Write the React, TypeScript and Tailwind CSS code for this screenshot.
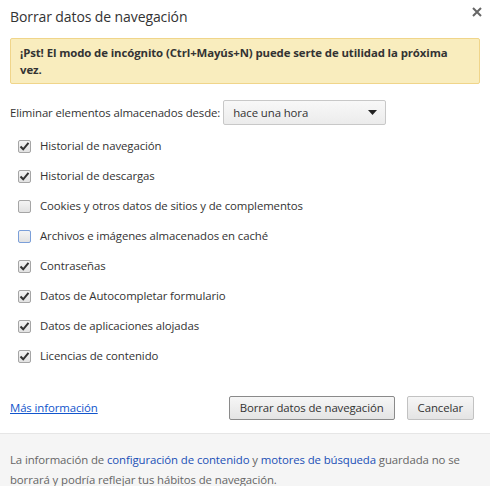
import React from 'react';

const items = [
  { label: 'Historial de navegación', checked: true },
  { label: 'Historial de descargas', checked: true },
  { label: 'Cookies y otros datos de sitios y de complementos', checked: false },
  { label: 'Archivos e imágenes almacenados en caché', checked: false, focus: true },
  { label: 'Contraseñas', checked: true },
  { label: 'Datos de Autocompletar formulario', checked: true },
  { label: 'Datos de aplicaciones alojadas', checked: true },
  { label: 'Licencias de contenido', checked: true },
];

const Check = ({ checked, focus }: { checked: boolean; focus?: boolean }) => (
  <div
    className={`w-[13px] h-[13px] rounded-[2px] border bg-gradient-to-b from-[#f4f4f4] to-[#e2e2e2] flex items-center justify-center ${
      focus ? 'border-[#7b9fd9]' : 'border-[#a5a5a5]'
    }`}
  >
    {checked && (
      <svg width="11" height="11" viewBox="0 0 11 11">
        <path d="M1.5 5.5 L4.2 8.3 L9.5 1.8" fill="none" stroke="#333" strokeWidth="2" />
      </svg>
    )}
  </div>
);

export default function App() {
  return (
    <div className="w-[490px] h-[486px] bg-white text-[#333] text-[11.4px] tracking-[-0.1px] overflow-hidden flex flex-col" style={{ fontFamily: '"Open Sans", sans-serif' }}>
      <div className="flex justify-between pl-[10px] pr-[8px] pt-[6px]">
        <h1 className="text-[14px] text-[#333]">Borrar datos de navegación</h1>
        <svg width="10" height="10" viewBox="0 0 10 10" className="mt-[1px]">
          <path d="M1 1 L9 9 M9 1 L1 9" stroke="#666" strokeWidth="2" />
        </svg>
      </div>

      <div className="mx-[10px] mt-[11px] border border-[#f0d58a] bg-[#f9edbe] rounded-[2px] px-[9px] py-[5px] font-bold leading-[17px] text-[#333]">
        ¡Pst! El modo de incógnito (Ctrl+Mayús+N) puede serte de utilidad la próxima vez.
      </div>

      <div className="flex items-center gap-[3px] pl-[10px] mt-[16px]">
        <span>Eliminar elementos almacenados desde:</span>
        <div className="w-[163px] h-[25px] border border-[#c8c8c8] rounded-[2px] bg-gradient-to-b from-[#f8f8f8] to-[#ececec] flex items-center justify-between pl-[9px] pr-[8px]">
          <span>hace una hora</span>
          <svg width="9" height="5" viewBox="0 0 9 5">
            <path d="M0 0 H9 L4.5 5 Z" fill="#222" />
          </svg>
        </div>
      </div>

      <div className="flex flex-col pl-[18px] mt-[6px]">
        {items.map((it) => (
          <div key={it.label} className="flex items-center gap-[9px] h-[30px]">
            <Check checked={it.checked} focus={it.focus} />
            <span>{it.label}</span>
          </div>
        ))}
      </div>

      <div className="flex items-center justify-between pl-[10px] pr-[16px] mt-[25px]">
        <a className="text-[#1155cc] underline">Más información</a>
        <div className="flex gap-[12px]">
          <button className="h-[24px] px-[10px] border border-[#8a8a8a] rounded-[2px] bg-gradient-to-b from-[#f6f6f6] to-[#e4e4e4] text-[#333]">
            Borrar datos de navegación
          </button>
          <button className="h-[24px] px-[10px] border border-[#c2c2c2] rounded-[2px] bg-gradient-to-b from-[#f6f6f6] to-[#e4e4e4] text-[#333]">
            Cancelar
          </button>
        </div>
      </div>

      <div className="mt-[13px] flex-1 border-t border-[#e6e6e6] bg-[#f5f5f5] px-[10px] pt-[16px] leading-[20px] text-[#666]">
        <p>
          La información de <a className="text-[#1a4fb5]">configuración de contenido</a> y{' '}
          <a className="text-[#1a4fb5]">motores de búsqueda</a> guardada no se borrará y podría reflejar tus hábitos de navegación.
        </p>
      </div>
    </div>
  );
}
